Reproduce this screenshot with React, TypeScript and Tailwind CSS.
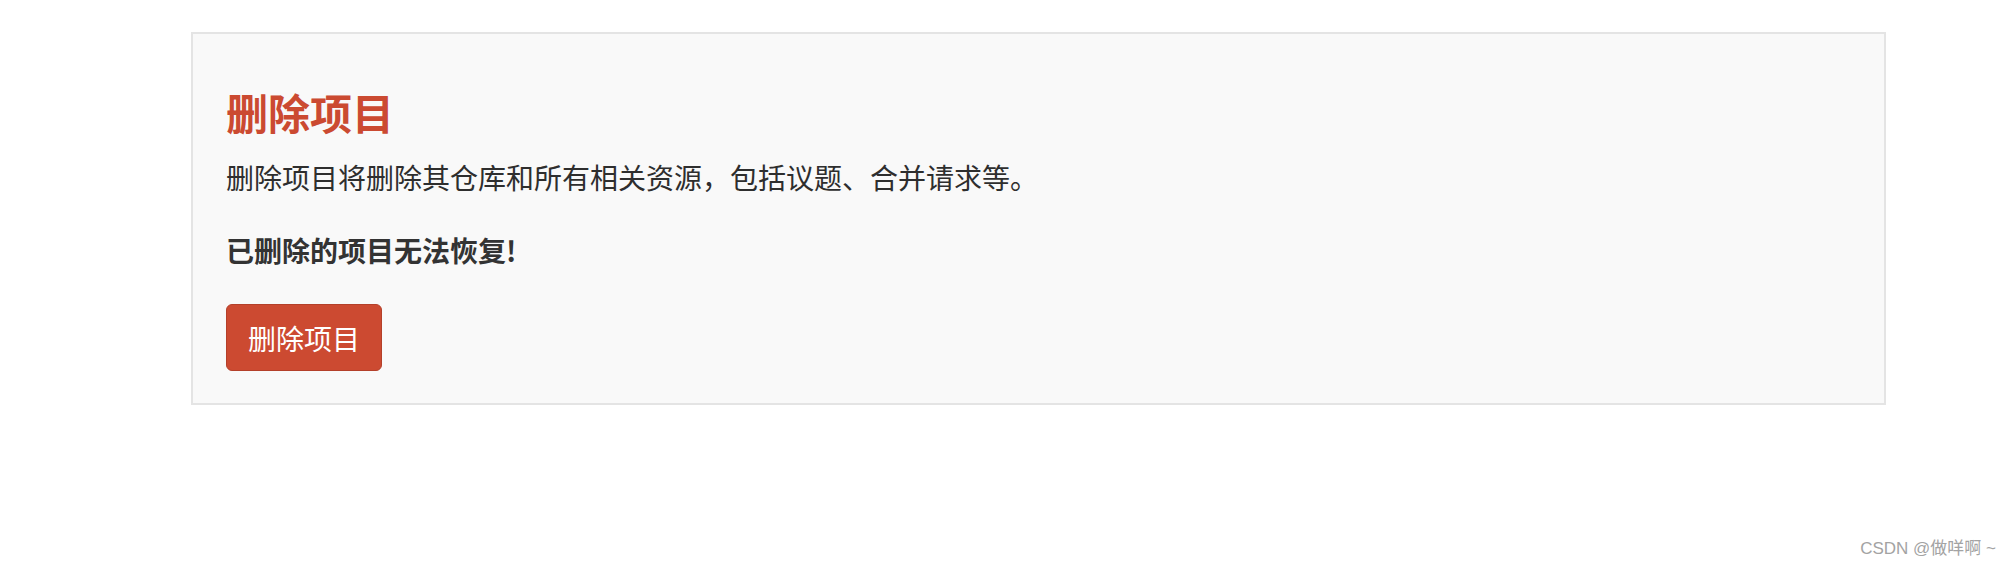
export default function App() {
  return (
    <div className="relative h-[568px] w-full bg-white pt-[32px] font-['Noto_Sans_CJK_SC',sans-serif]">
      {/* 危险操作区 */}
      <div className="ml-[191px] h-[373px] w-[1695px] border-2 border-[#e4e4e4] bg-[#f9f9f9] pl-[33px] pt-[55px]">
        <h2 className="text-[42px] font-bold leading-[46px] text-[#cb4a31]">删除项目</h2>
        <p className="mt-[22px] text-[28px] leading-[40px] text-[#2e2e2e]">
          删除项目将删除其仓库和所有相关资源，包括议题、合并请求等。
        </p>
        <p className="mt-[33px] text-[28px] font-bold leading-[40px] text-[#333333]">已删除的项目无法恢复!</p>
        <button
          type="button"
          className="mt-[34px] flex h-[67px] w-[156px] items-center justify-center rounded-[6px] border border-[#b4402a] bg-[#cc4a31] text-[28px] text-white"
        >
          删除项目
        </button>
      </div>

      <span className="absolute bottom-[9px] right-[14px] font-['Liberation_Sans','Noto_Sans_CJK_SC',sans-serif] text-[17px] leading-[20px] text-[#a3a3a3]">
        CSDN @做咩啊 ~
      </span>
    </div>
  );
}
